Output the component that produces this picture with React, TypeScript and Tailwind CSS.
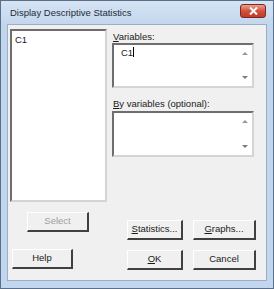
import React from 'react'

const font = { fontFamily: '"Liberation Sans", Arial, sans-serif' }

type BtnProps = {
    label: React.ReactNode
    w: string
    disabled?: boolean
}

const Btn = ({ label, w, disabled }: BtnProps) => {
    return (
        <div
            className={`${w} h-[20px] flex items-center justify-center text-[9.5px] bg-[#f0f0f0] border-t border-l border-t-white border-l-white border-b-2 border-r-2 border-b-[#404040] border-r-[#404040] ${
                disabled ? 'text-[#a0a0a0]' : 'text-[#1a1a1a]'
            }`}
        >
            {label}
        </div>
    )
}

const ScrollBox = ({ text, h }: { text?: React.ReactNode; h: string }) => {
    return (
        <div
            className={`w-[142px] ${h} bg-white border-2 border-t-[#6e6e6e] border-l-[#6e6e6e] border-b-[#d4d4d4] border-r-[#d4d4d4] flex`}
        >
            <div className="flex-1 pl-[7px] pt-[2px] text-[9.5px] text-[#1a1a1a] leading-[12px]">
                {text}
            </div>
            <div className="w-[14px] flex flex-col justify-between items-center py-[6px]">
                <svg width="6" height="4" viewBox="0 0 6 4">
                    <path d="M0 4 L3 1 L6 4 Z" fill="#9a9a9a" />
                </svg>
                <svg width="6" height="4" viewBox="0 0 6 4">
                    <path d="M0 0 L3 3 L6 0 Z" fill="#7a7a7a" />
                </svg>
            </div>
        </div>
    )
}

const U = ({ c }: { c: string }) => <span className="underline underline-offset-1">{c}</span>

export default function App() {
    return (
        <div
            className="w-[274px] h-[289px] bg-[#c2d6ed] border border-[#5a6f8c] flex flex-col"
            style={font}
        >
            <div className="h-[23px] flex items-center justify-between pl-[9px] pr-[7px] bg-gradient-to-b from-[#d6e4f3] to-[#c3d7ed]">
                <span className="text-[9.5px] text-[#1e2a3a] pt-[1px]">Display Descriptive Statistics</span>
                <div className="w-[26px] h-[14px] mt-[-4px] rounded-[3px] border border-[#7a2a20] bg-gradient-to-b from-[#e8a092] via-[#d2503c] to-[#c03a28] flex items-center justify-center">
                    <svg width="9" height="8" viewBox="0 0 9 8">
                        <path d="M1 0.5 L8 7.5 M8 0.5 L1 7.5" stroke="white" strokeWidth="2" />
                    </svg>
                </div>
            </div>
            <div className="mx-[6px] mb-[7px] flex-1 bg-[#f0f0f0] border border-[#98afcb] flex pl-[2px] pt-[4px]">
                <div className="w-[97px] flex flex-col">
                    <div className="h-[173px] bg-white border-2 border-t-[#6e6e6e] border-l-[#6e6e6e] border-b-[#d4d4d4] border-r-[#d4d4d4] pl-[3px] pt-[2px] text-[9.5px] text-[#1a1a1a]">
                        C1
                    </div>
                    <div className="mt-[10px] ml-[17px]">
                        <Btn label="Select" w="w-[62px]" disabled />
                    </div>
                    <div className="mt-[17px] ml-[2px]">
                        <Btn label="Help" w="w-[61px]" />
                    </div>
                </div>
                <div className="ml-[5px] flex flex-col">
                    <div className="text-[9.5px] text-[#1a1a1a] h-[13px] leading-[13px] mt-[1px] ml-[1px]">
                        <U c="V" />ariables:
                    </div>
                    <ScrollBox
                        h="h-[45px]"
                        text={
                            <span>
                                C1<span className="inline-block w-px h-[10px] bg-black align-[-1px]" />
                            </span>
                        }
                    />
                    <div className="text-[9.5px] text-[#1a1a1a] h-[13px] leading-[13px] mt-[9px] mb-[1px] ml-[1px]">
                        <U c="B" />y variables (optional):
                    </div>
                    <ScrollBox h="h-[46px]" />
                    <div className="mt-[63px] ml-[15px] flex gap-[10px]">
                        <Btn label={<span><U c="S" />tatistics...</span>} w="w-[56px]" />
                        <Btn label={<span><U c="G" />raphs...</span>} w="w-[63px]" />
                    </div>
                    <div className="mt-[10px] ml-[15px] flex gap-[10px]">
                        <Btn label={<span><U c="O" />K</span>} w="w-[56px]" />
                        <Btn label="Cancel" w="w-[63px]" />
                    </div>
                </div>
            </div>
        </div>
    )
}
